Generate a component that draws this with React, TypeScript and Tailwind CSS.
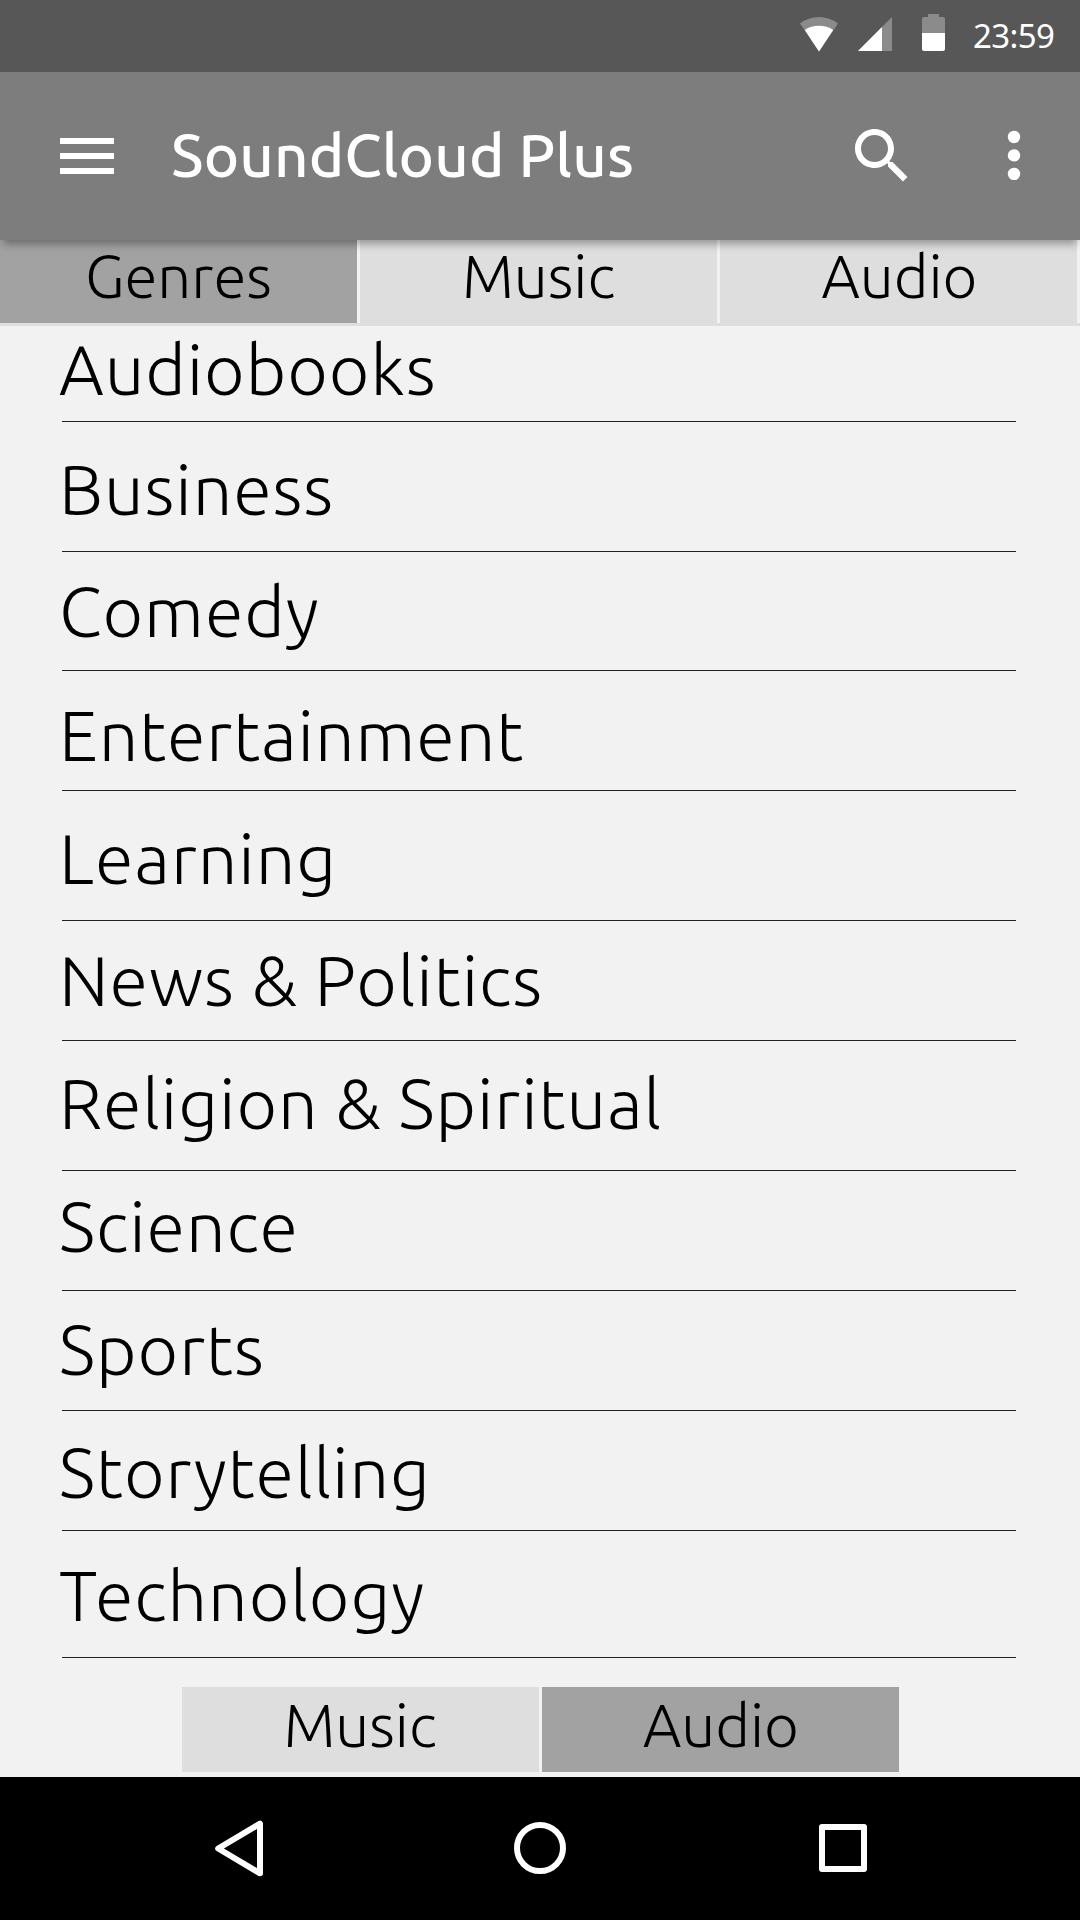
const genres: { label: string; row: string }[] = [
  { label: "Audiobooks", row: "h-[96px] pt-[13px]" },
  { label: "Business", row: "h-[130px] pt-[37px]" },
  { label: "Comedy", row: "h-[119px] pt-[29px]" },
  { label: "Entertainment", row: "h-[120px] pt-[34px]" },
  { label: "Learning", row: "h-[130px] pt-[37px]" },
  { label: "News & Politics", row: "h-[120px] pt-[29px]" },
  { label: "Religion & Spiritual", row: "h-[130px] pt-[32px]" },
  { label: "Science", row: "h-[120px] pt-[25px]" },
  { label: "Sports", row: "h-[120px] pt-[28px]" },
  { label: "Storytelling", row: "h-[120px] pt-[31px]" },
  { label: "Technology", row: "h-[127px] pt-[34px]" },
];

function StatusBar() {
  return (
    <div className="flex h-[72px] items-start bg-[#575757] pl-[800px]">
      <svg className="mt-[14px] h-[40px] w-[146px] shrink-0" viewBox="0 0 146 40">
        <path d="M19 37.5 0 9.5Q8.500 3 19 3T38 9.500Z" fill="#8b8b8b" />
        <path d="M19 37.500 4.800 16Q11 11.800 19 11.800T33.200 16Z" fill="#fff" />
        <path d="M58 37 92 3V37Z" fill="#8b8b8b" />
        <path d="M58 37 82 13V37Z" fill="#fff" />
        <path d="M122 19V5a2 2 0 0 1 2-2h4V0h11v3h4a2 2 0 0 1 2 2v14Z" fill="#8b8b8b" />
        <path d="M122 19h23v16a2 2 0 0 1-2 2h-19a2 2 0 0 1-2-2Z" fill="#fff" />
      </svg>
      <span className="ml-[27px] mt-[16px] whitespace-nowrap font-['Noto_Sans',sans-serif] text-[33px] font-normal leading-[40px] tracking-[-0.6px] text-white">
        23:59
      </span>
    </div>
  );
}

function AppBar() {
  return (
    <header className="relative flex h-[168px] items-start bg-[#7d7d7d] text-white">
      <div className="absolute inset-x-[3px] bottom-0 h-[20px] shadow-[0_4px_8px_rgba(0,0,0,0.34)]" />
      <div className="absolute inset-0 bg-[#7d7d7d]" />
      <svg className="relative ml-[60px] mt-[66px] h-[36px] w-[54px] shrink-0" viewBox="0 0 54 36" fill="#fff">
        <path d="M0 0h54v6H0zM0 15h54v6H0zM0 30h54v6H0z" />
      </svg>
      <h1 className="relative ml-[57px] mt-[53px] flex-1 whitespace-nowrap text-[60px] font-medium leading-[60px] tracking-[0.08px]">
        SoundCloud Plus
      </h1>
      <svg className="relative mt-[48px] h-[72px] w-[72px] shrink-0" viewBox="0 0 24 24" fill="#fff">
        <path d="M15.5 14h-.79l-.28-.27C15.41 12.59 16 11.11 16 9.5 16 5.91 13.09 3 9.5 3S3 5.91 3 9.5 5.91 16 9.5 16c1.61 0 3.09-.59 4.23-1.57l.27.28v.79l5 4.99L20.49 19l-4.99-5zm-6 0C7.01 14 5 11.99 5 9.5S7.01 5 9.5 5 14 7.01 14 9.5 11.99 14 9.5 14z" />
      </svg>
      <svg className="relative ml-[89px] mr-[59px] mt-[58px] h-[50px] w-[14px] shrink-0" viewBox="0 0 14 50" fill="#fff">
        <circle cx="7" cy="7" r="6.2" />
        <circle cx="7" cy="25.4" r="6.2" />
        <circle cx="7" cy="43.9" r="6.2" />
      </svg>
    </header>
  );
}

export default function App() {
  return (
    <div className="flex h-[1920px] w-[1080px] flex-col overflow-hidden bg-[#f2f2f2] font-['Ubuntu','Noto_Sans',sans-serif] font-light text-black">
      <div className="relative z-10">
        <StatusBar />
        <AppBar />
      </div>

      <nav className="flex h-[86px] gap-[3px] border-b-[3px] border-[#dedede] pr-[3px] text-center text-[60px] leading-[60px]">
        <div className="w-[357px] bg-[#a2a2a2] pt-[6px]">Genres</div>
        <div className="w-[357px] bg-[#dedede] pt-[6px]">Music</div>
        <div className="w-[357px] bg-[#dedede] pl-[2px] pt-[6px]">Audio</div>
      </nav>

      <ul className="ml-[62px] w-[954px]">
        {genres.map((g) => (
          <li key={g.label} className={"border-b border-[#222222] " + g.row}>
            <div className="ml-[-3px] whitespace-nowrap text-[70px] leading-[60px] tracking-[0.95px]">{g.label}</div>
          </li>
        ))}
      </ul>

      <div className="mt-[29px] flex h-[85px] justify-center gap-[3px] text-center text-[60px] leading-[60px]">
        <div className="w-[357px] bg-[#dedede] pt-[8px]">Music</div>
        <div className="w-[357px] bg-[#a2a2a2] pl-[2px] pt-[8px]">Audio</div>
      </div>

      <div className="mt-[5px] flex h-[143px] items-center bg-black pb-[1px] pl-[213px]">
        <svg className="h-[60px] w-[52px]" viewBox="0 0 52 60" fill="none" stroke="#fff" strokeWidth="6" strokeLinejoin="round">
          <path d="M47 5.700V55.300L5.200 30.500Z" />
        </svg>
        <svg className="ml-[249px] h-[52px] w-[52px]" viewBox="0 0 52 52" fill="none" stroke="#fff" strokeWidth="6">
          <circle cx="26" cy="26" r="23" />
        </svg>
        <div className="ml-[253px] h-[48px] w-[48px] rounded-[3px] border-[6px] border-white" />
      </div>
    </div>
  );
}
